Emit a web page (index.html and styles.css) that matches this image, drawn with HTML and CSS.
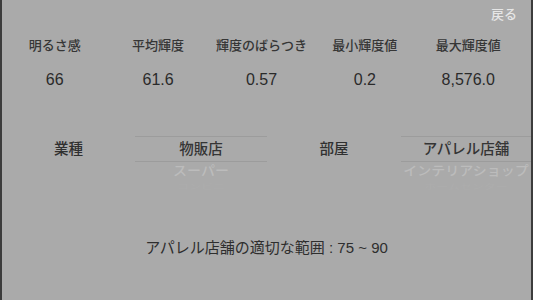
FILE: index.html
```html
<!DOCTYPE html>
<html lang="ja">
<head>
<meta charset="utf-8">
<link rel="stylesheet" href="styles.css">
</head>
<body>
<div class="frame">
  <div class="topbar"><span class="back">戻る</span></div>
  <div class="stats">
    <div class="label">明るさ感</div>
    <div class="label">平均輝度</div>
    <div class="label">輝度のばらつき</div>
    <div class="label">最小輝度値</div>
    <div class="label">最大輝度値</div>
    <div class="value">66</div>
    <div class="value">61.6</div>
    <div class="value">0.57</div>
    <div class="value">0.2</div>
    <div class="value">8,576.0</div>
  </div>
  <div class="pickers">
    <div class="plabel">業種</div>
    <div class="picker">
      <div class="sel">物販店</div>
      <div class="item2">スーパー</div>
      <div class="item3">コンビニ</div>
    </div>
    <div class="plabel">部屋</div>
    <div class="picker">
      <div class="sel">アパレル店舗</div>
      <div class="item2">インテリアショップ</div>
      <div class="item3">ホームセンター</div>
    </div>
  </div>
  <div class="range">アパレル店舗の適切な範囲 : 75 ~ 90</div>
</div>
</body>
</html>
```
FILE: styles.css
```css
* { box-sizing: border-box; }
html, body {
  margin: 0;
  padding: 0;
  background: #aaaaaa;
}
body {
  font-family: "Liberation Sans", "Noto Sans CJK JP", sans-serif;
  color: #2e2e2e;
}
.frame {
  width: 533px;
  height: 300px;
  border-left: 2px solid #3c3c3c;
  border-right: 2px solid #3c3c3c;
  background: #aaaaaa;
  overflow: hidden;
}
.topbar {
  height: 30px;
  display: flex;
  justify-content: flex-end;
  align-items: center;
  padding-right: 14px;
}
.back {
  font-size: 13px;
  font-weight: 500;
  color: #e6e6e6;
  line-height: 20px;
}
.stats {
  display: grid;
  grid-template-columns: repeat(5, 103.4px);
  grid-template-rows: 20px 20px;
  row-gap: 14px;
  padding-left: 1px;
  margin-top: 6px;
}
.label {
  text-align: center;
  font-size: 13px;
  font-weight: 500;
  line-height: 20px;
  color: #363636;
}
.value {
  text-align: center;
  font-size: 16px;
  line-height: 20px;
  color: #2a2a2a;
}
.pickers {
  display: grid;
  grid-template-columns: 133px 132px 134px 130px;
  margin-top: 46px;
  height: 80px;
}
.plabel {
  text-align: center;
  font-size: 14.5px;
  font-weight: 500;
  line-height: 26px;
  color: #303030;
  align-self: start;
}
.picker {
  display: flex;
  flex-direction: column;
  align-items: stretch;
  text-align: center;
}
.sel {
  height: 26px;
  line-height: 25px;
  font-size: 14.5px;
  font-weight: 500;
  border-top: 1px solid #9c9c9c;
  border-bottom: 1px solid #9c9c9c;
  color: #353535;
  white-space: nowrap;
}
.item2 {
  line-height: 18px;
  font-size: 14px;
  font-weight: 500;
  color: #bcbcbc;
  white-space: nowrap;
  transform: scaleY(0.9);
}
.item3 {
  line-height: 14px;
  font-size: 12px;
  color: #adadad;
  white-space: nowrap;
  transform: scaleY(0.6);
}
.range {
  text-align: center;
  font-size: 15px;
  line-height: 20px;
  margin-top: 22px;
  color: #2e2e2e;
}
```
